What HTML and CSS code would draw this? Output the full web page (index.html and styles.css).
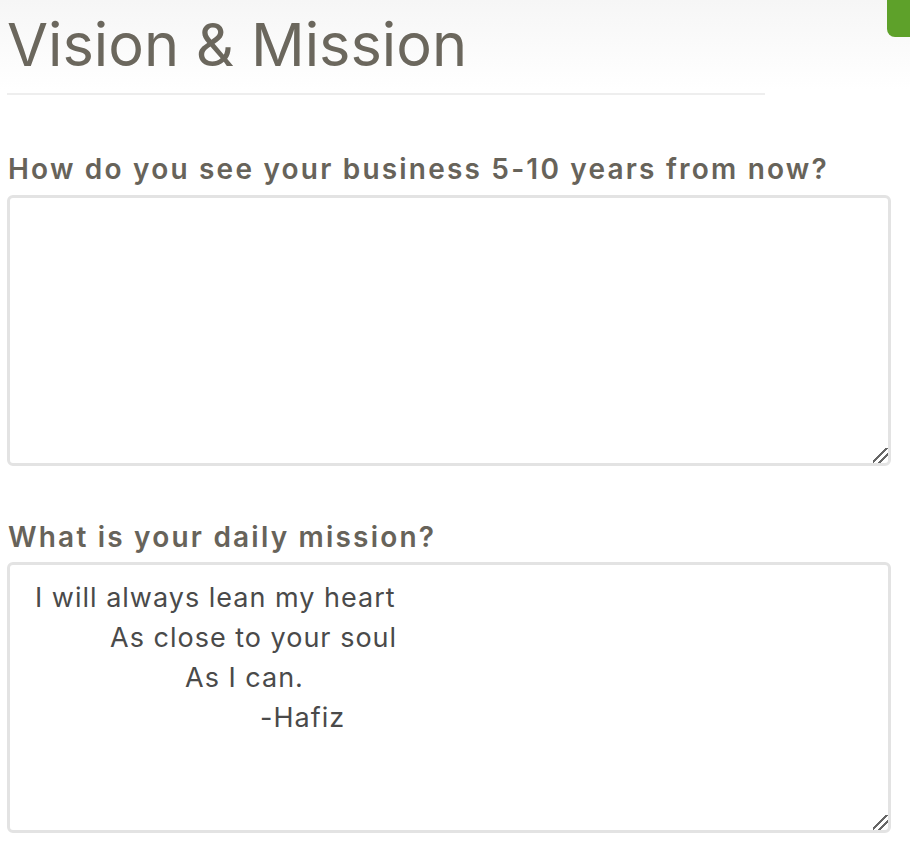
FILE: index.html
```html
<!DOCTYPE html>
<html>
<head>
<meta charset="utf-8">
<link rel="stylesheet" href="styles.css">
</head>
<body>
<div class="tab"></div>
<main class="page">
  <h1 class="title">Vision &amp; Mission</h1>
  <hr class="rule">
  <form class="form">
    <div class="field">
      <label class="label" for="q1">How do you see your business 5-10 years from now?</label>
      <textarea class="box" id="q1"></textarea>
    </div>
    <div class="field">
      <label class="label" for="q2">What is your daily mission?</label>
      <textarea class="box box-text" id="q2">I will always lean my heart
	As close to your soul
		As I can.
			-Hafiz</textarea>
    </div>
  </form>
</main>
</body>
</html>
```
FILE: styles.css
```css
html, body {
  margin: 0;
  padding: 0;
}
body {
  background: linear-gradient(#f6f6f6 0px, #ffffff 90px) no-repeat;
  background-color: #fff;
  font-family: Inter, "Open Sans", sans-serif;
  width: 910px;
  height: 866px;
  overflow: hidden;
  position: relative;
}
.tab {
  position: absolute;
  top: 0;
  right: 0;
  width: 23px;
  height: 37px;
  background: #5ea12a;
  border-bottom-left-radius: 8px;
}
.page {
  padding: 0 0 0 7px;
  width: 884px;
}
.title {
  margin: 0;
  padding-top: 10px;
  font-size: 59.5px;
  line-height: 68px;
  font-weight: 400;
  color: #6b675d;
  letter-spacing: 0;
}
.rule {
  margin: 15px 0 0 0;
  width: 758px;
  border: 0;
  height: 2px;
  background: #eeeeee;
}
.form {
  display: flex;
  flex-direction: column;
  gap: 55px;
  padding-top: 58px;
}
.field {
  display: flex;
  flex-direction: column;
  gap: 9px;
}
.field:first-child {
  gap: 10px;
}
.label {
  font-size: 28px;
  line-height: 32px;
  font-weight: 600;
  color: #67635a;
  letter-spacing: 2.2px;
  padding-left: 1px;
}
.box {
  box-sizing: border-box;
  width: 884px;
  height: 271px;
  border: 3px solid #e3e3e3;
  border-radius: 6px;
  background: #fff;
  padding: 13px 25px;
  font-family: Inter, "Open Sans", sans-serif;
  font-size: 27px;
  line-height: 40px;
  letter-spacing: 1px;
  color: #4a4a4a;
  tab-size: 75px;
  -moz-tab-size: 75px;
  outline: none;
  white-space: pre-wrap;
}
.box::-webkit-resizer {
  background: linear-gradient(135deg,
    transparent 0 42%,
    #666 42% 52%,
    transparent 52% 66%,
    #666 66% 76%,
    transparent 76%);
}
```
